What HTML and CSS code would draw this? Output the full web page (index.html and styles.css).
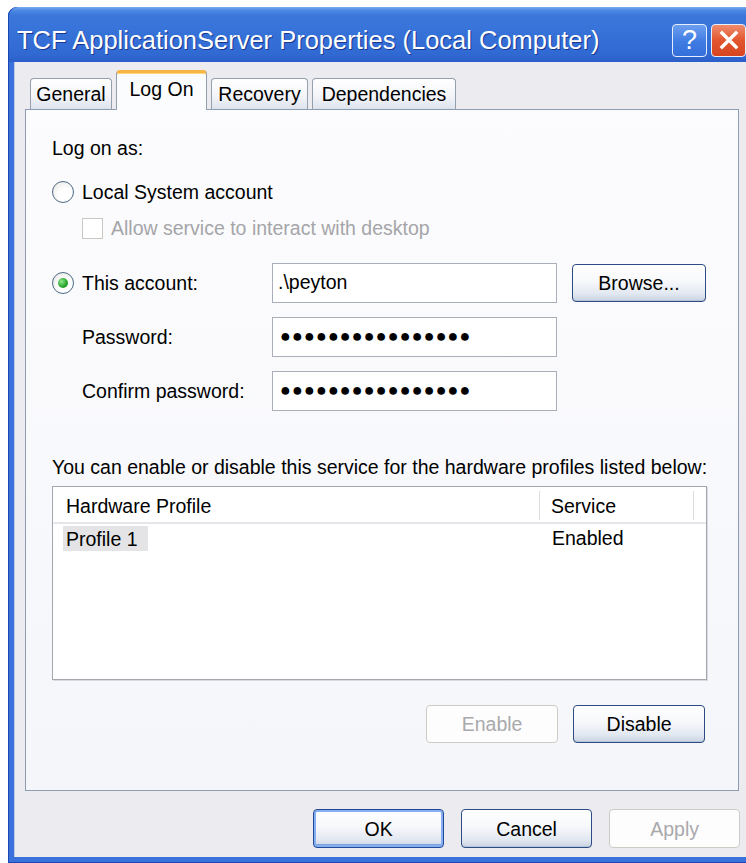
FILE: index.html
```html
<!DOCTYPE html>
<html lang="en">
<head>
<meta charset="utf-8">
<title>TCF ApplicationServer Properties (Local Computer)</title>
<link rel="stylesheet" href="styles.css">
</head>
<body>
<div class="window">
  <div class="titlebar">
    <span class="title">TCF ApplicationServer Properties (Local Computer)</span>
    <div class="caption-buttons">
      <span class="cap-btn help">?</span>
      <span class="cap-btn close">
        <svg width="20" height="20" viewBox="0 0 20 20"><path d="M3 3 L17 17 M17 3 L3 17" stroke="#fff" stroke-width="3.4" stroke-linecap="square"/></svg>
      </span>
    </div>
  </div>
  <div class="frame">
    <div class="client">
      <div class="tabs">
        <div class="tab tab-general">General</div>
        <div class="tab tab-logon active">Log On</div>
        <div class="tab tab-recovery">Recovery</div>
        <div class="tab tab-deps">Dependencies</div>
      </div>
      <div class="page">
        <div class="group-label">Log on as:</div>
        <div class="option">
          <span class="radio"></span><span>Local System account</span>
        </div>
        <div class="option sub disabled">
          <span class="checkbox"></span><span>Allow service to interact with desktop</span>
        </div>
        <div class="fields">
          <div class="field-row">
            <div class="field-label"><span class="radio checked"></span><span>This account:</span></div>
            <div class="textbox">.\peyton</div>
            <div class="btn btn-browse">Browse...</div>
          </div>
          <div class="field-row">
            <div class="field-label indent">Password:</div>
            <div class="textbox masked">●●●●●●●●●●●●●●●●</div>
          </div>
          <div class="field-row">
            <div class="field-label indent">Confirm password:</div>
            <div class="textbox masked">●●●●●●●●●●●●●●●●</div>
          </div>
        </div>
        <p class="note">You can enable or disable this service for the hardware profiles listed below:</p>
        <div class="listview">
          <div class="lv-header">
            <div class="lv-col col-profile">Hardware Profile</div>
            <div class="lv-col col-service">Service</div>
            <div class="lv-col col-rest"></div>
          </div>
          <div class="lv-row">
            <div class="lv-cell col-profile"><span class="lv-item">Profile 1</span></div>
            <div class="lv-cell col-service">Enabled</div>
          </div>
        </div>
        <div class="page-buttons">
          <div class="btn disabled">Enable</div>
          <div class="btn">Disable</div>
        </div>
      </div>
      <div class="dialog-buttons">
        <div class="btn default">OK</div>
        <div class="btn">Cancel</div>
        <div class="btn disabled">Apply</div>
      </div>
    </div>
  </div>
</div>
</body>
</html>
```
FILE: styles.css
```css
html, body {
  margin: 0;
  padding: 0;
}

body {
  width: 746px;
  height: 863px;
  overflow: hidden;
  background: #ffffff;
  font-family: "Liberation Sans", Arial, sans-serif;
  font-size: 19.5px;
  line-height: 22px;
  color: #000000;
}

/* ---------- window chrome ---------- */
.window {
  margin: 7px 0 0 8px;
  width: 748px;
  height: 856px;
  display: flex;
  flex-direction: column;
  border-radius: 9px 9px 0 0;
  background: #2f66d5;
}

.titlebar {
  flex: none;
  height: 55px;
  box-sizing: border-box;
  padding: 11px 10px 0 9px;
  display: flex;
  align-items: center;
  border-radius: 9px 9px 0 0;
  background: linear-gradient(to bottom,
    #7eacf0 0px, #4f8ae4 3px, #3c78db 8px,
    #3672d8 45%, #3169d3 85%, #2b5fc9 100%);
  box-shadow: inset 1px 0 0 #1c47b3;
}

.title {
  color: #ffffff;
  font-size: 25.5px;
  line-height: 30px;
  white-space: nowrap;
  text-shadow: 1px 1px 0 #18388f;
}

.caption-buttons {
  margin-left: auto;
  display: flex;
  gap: 4px;
}

.cap-btn {
  width: 35px;
  height: 33px;
  box-sizing: border-box;
  border: 1px solid #e6eefc;
  border-radius: 4px;
  display: flex;
  align-items: center;
  justify-content: center;
  color: #ffffff;
}

.cap-btn.help {
  background: linear-gradient(to bottom, #6d9ff0, #3e7be2 55%, #3470da);
  font-size: 27px;
  line-height: 1;
}

.cap-btn.close {
  background: linear-gradient(to bottom, #ef8c6d, #e2552e 50%, #d7451f);
}

.frame {
  flex: 1;
  display: flex;
  padding: 0 6px 6px 6px;
  background: #3a71db;
  box-shadow: inset 1px 0 0 #1c47b3, inset 0 -1px 0 #1c47b3;
}

.client {
  flex: 1;
  display: flex;
  flex-direction: column;
  padding: 8px 11px 0 11px;
  background: #ecebf0;
  box-shadow: inset 1px 0 0 #bfcbe6;
}

/* ---------- tabs ---------- */
.tabs {
  display: flex;
  align-items: flex-end;
  gap: 4px;
  height: 40px;
  margin: 0 0 -1px 5px;
  position: relative;
  z-index: 1;
}

.tab {
  height: 31px;
  box-sizing: border-box;
  margin-bottom: 1px;
  border: 1px solid #94a0ad;
  border-bottom: none;
  border-radius: 4px 4px 0 0;
  display: flex;
  align-items: center;
  justify-content: center;
  background: linear-gradient(to bottom, #ffffff, #f4f5f9 55%, #dde3ed);
  white-space: nowrap;
}

.tab-general { width: 82px; }
.tab-logon { width: 91px; }
.tab-recovery { width: 97px; }
.tab-deps { width: 144px; }

.tab.active {
  height: 40px;
  margin-bottom: 0;
  border-top: 3px solid #f7b545;
  padding-bottom: 5px;
  background: #fbfcfe;
  box-shadow: inset 0 1px 0 #ffd77a;
}

.page {
  border: 1px solid #8e9cb0;
  background: linear-gradient(to bottom, #fcfcfe, #f5f6fa);
  padding: 27px 31px 47px 26px;
  display: flex;
  flex-direction: column;
}

/* ---------- options ---------- */
.option {
  display: flex;
  align-items: center;
  gap: 8px;
  height: 22px;
  margin-top: 22px;
}

.option.sub {
  margin: 14px 0 0 30px;
}

.disabled {
  color: #a5a5a8;
}

.radio {
  flex: none;
  width: 22px;
  height: 22px;
  box-sizing: border-box;
  border-radius: 50%;
  border: 1px solid #4e6a88;
  background: radial-gradient(circle at 62% 65%, #ffffff 0, #ffffff 35%, #e4e4e0 100%);
  display: inline-flex;
  align-items: center;
  justify-content: center;
}

.radio.checked::after {
  content: "";
  width: 10px;
  height: 10px;
  border-radius: 50%;
  background: radial-gradient(circle at 35% 35%, #8ee88e, #27a327 60%, #1b8a1b);
}

.checkbox {
  flex: none;
  width: 21px;
  height: 21px;
  box-sizing: border-box;
  border: 1px solid #cac8c0;
  background: #ffffff;
}

/* ---------- account fields ---------- */
.fields {
  margin-top: 24px;
  display: flex;
  flex-direction: column;
  gap: 14px;
}

.field-row {
  display: flex;
  align-items: center;
}

.field-label {
  width: 220px;
  flex: none;
  display: flex;
  align-items: center;
  gap: 8px;
}

.field-label.indent {
  padding-left: 30px;
  box-sizing: border-box;
}

.textbox {
  width: 285px;
  height: 40px;
  box-sizing: border-box;
  border: 1px solid #a9afb8;
  background: #ffffff;
  padding: 0 5px;
  display: flex;
  align-items: center;
  padding-bottom: 3px;
}

.textbox.masked {
  padding: 0 7px 2px;
  font-size: 18px;
  letter-spacing: 1.1px;
}

/* ---------- buttons ---------- */
.btn {
  width: 132px;
  height: 38px;
  box-sizing: border-box;
  border: 1px solid #2c4c84;
  border-radius: 4px;
  display: flex;
  align-items: center;
  justify-content: center;
  background: linear-gradient(to bottom, #ffffff 0%, #f7f8fb 45%, #e2e8f1 80%, #c9d3e2 100%);
  box-shadow: inset 0 -1px 0 #b7c3d6;
  flex: none;
}

.btn-browse {
  width: 134px;
  margin-left: 15px;
}

.btn.disabled {
  border-color: #cdcbc4;
  background: #fdfdfd;
  box-shadow: none;
  color: #a9a9ac;
}

.btn.default {
  border-color: #1f4a9a;
  box-shadow: inset 0 0 0 2px #86aef0, inset 0 -3px 0 #7aa0e0;
}

/* ---------- description and list ---------- */
.note {
  margin: 45px 0 0 0;
  white-space: nowrap;
}

.listview {
  margin-top: 8px;
  height: 194px;
  box-sizing: border-box;
  border: 1px solid #a3a6ad;
  background: #ffffff;
  box-shadow: 1px 1px 0 #d9dbe2;
}

.lv-header {
  display: flex;
  height: 37px;
  box-sizing: border-box;
  border-bottom: 2px solid #e6e6ea;
  background: #ffffff;
}

.lv-col {
  display: flex;
  align-items: center;
  box-sizing: border-box;
  border-right: 1px solid #dcdce0;
  margin: 4px 0 2px;
}

.col-profile {
  width: 487px;
  padding-left: 13px;
}

.col-service {
  width: 154px;
  padding-left: 11px;
}

.col-rest {
  flex: 1;
  border-right: none;
}

.lv-row {
  display: flex;
  height: 26px;
  margin-top: 1px;
}

.lv-cell {
  display: flex;
  align-items: center;
  box-sizing: border-box;
}

.lv-row .col-profile {
  padding-left: 10px;
}

.lv-row .col-service {
  padding-left: 12px;
}

.lv-item {
  background: #e4e4e6;
  padding: 2px 10px 1px 3px;
}

.page-buttons {
  margin-top: 25px;
  padding-right: 2px;
  display: flex;
  justify-content: flex-end;
  gap: 15px;
}

.dialog-buttons {
  margin-top: 18px;
  margin-right: -1px;
  display: flex;
  justify-content: flex-end;
  gap: 17px;
}

.dialog-buttons .btn {
  width: 131px;
  height: 39px;
}
```
